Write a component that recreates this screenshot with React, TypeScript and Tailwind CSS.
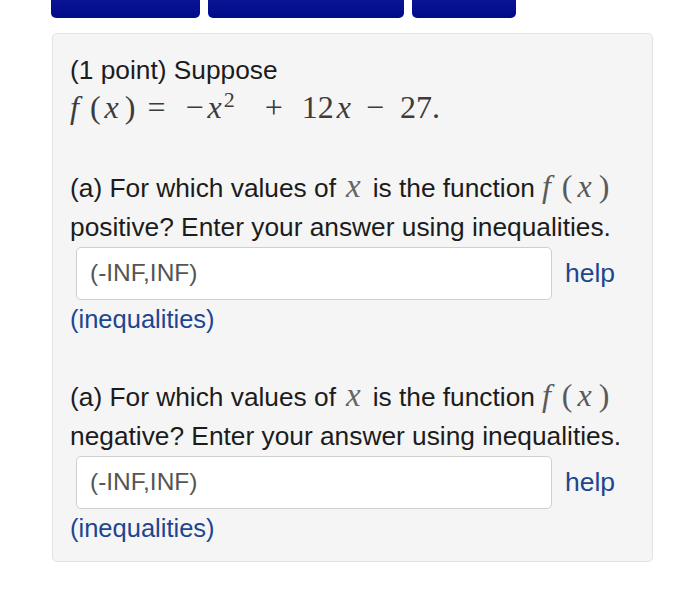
import React from "react";

const sans = { fontFamily: '"Liberation Sans", Arial, sans-serif' };
const serif = { fontFamily: '"Liberation Serif", "DejaVu Serif", serif' };

// f(x) spaced out the way the TeX renderer draws it
function MathFx() {
  return (
    <span className="ml-[7px] whitespace-nowrap text-[32px] text-[#5a5a5a]" style={serif}>
      <i>f</i>
      <span className="ml-[11px]">(</span>
      <i className="ml-[5px]">x</i>
      <span className="ml-[7px]">)</span>
    </span>
  );
}

function Question({ word }: { word: string }) {
  return (
    <div>
      <div className="whitespace-nowrap text-[26.3px] leading-[39px] text-[#1c1c1c]">
        (a) For which values of
        <i className="ml-[10px] mr-[12px] text-[33px] text-[#666]" style={serif}>
          x
        </i>
        is the function
        <MathFx />
      </div>
      <div className="whitespace-nowrap text-[26.3px] leading-[39px] text-[#1c1c1c]">
        {word}? Enter your answer using inequalities.
      </div>
      <div className="flex items-center">
        <div className="ml-[6px] flex h-[53px] w-[476px] items-center rounded-[5px] border border-[#cfcfcf] bg-white pl-[13px] text-[24.5px] text-[#555]">
          (-INF,INF)
        </div>
        <span className="ml-[13px] text-[26.5px] text-[#1d4690]">help</span>
      </div>
      <div className="text-[25.5px] leading-[39px] text-[#1d4690]">(inequalities)</div>
    </div>
  );
}

export default function App() {
  return (
    <div className="min-h-[595px] bg-white" style={sans}>
      <div className="ml-[51px] flex gap-[8px]">
        <div className="h-[18px] w-[149px] rounded-b-[5px] bg-gradient-to-b from-[#0a1494] to-[#000a8c]" />
        <div className="h-[18px] w-[196px] rounded-b-[5px] bg-gradient-to-b from-[#0a1494] to-[#000a8c]" />
        <div className="h-[18px] w-[104px] rounded-b-[5px] bg-gradient-to-b from-[#0a1494] to-[#000a8c]" />
      </div>
      <div className="ml-[52px] mt-[15px] h-[529px] w-[601px] rounded-[5px] border border-[#e2e2e2] bg-[#f5f5f5] pl-[17px] pt-[17px]">
        <div className="text-[26.3px] leading-[39px] text-[#1c1c1c]">(1 point) Suppose</div>
        <div className="h-[36px] whitespace-nowrap text-[32px] leading-[34px] text-[#3c3c3c]" style={serif}>
          <i>f</i>
          <span className="ml-[11px]">(</span>
          <i className="ml-[4px]">x</i>
          <span className="ml-[6px]">)</span>
          <span className="ml-[12px]">=</span>
          <span className="ml-[20px]">−</span>
          <i className="ml-[4px]">x</i>
          <sup className="ml-[2px] text-[22px]">2</sup>
          <span className="ml-[30px]">+</span>
          <span className="ml-[19px]">12</span>
          <i className="ml-[3px]">x</i>
          <span className="ml-[15px]">−</span>
          <span className="ml-[16px]">27.</span>
        </div>
        <div className="h-[41px]" />
        <Question word="positive" />
        <div className="h-[37px]" />
        <Question word="negative" />
      </div>
    </div>
  );
}
